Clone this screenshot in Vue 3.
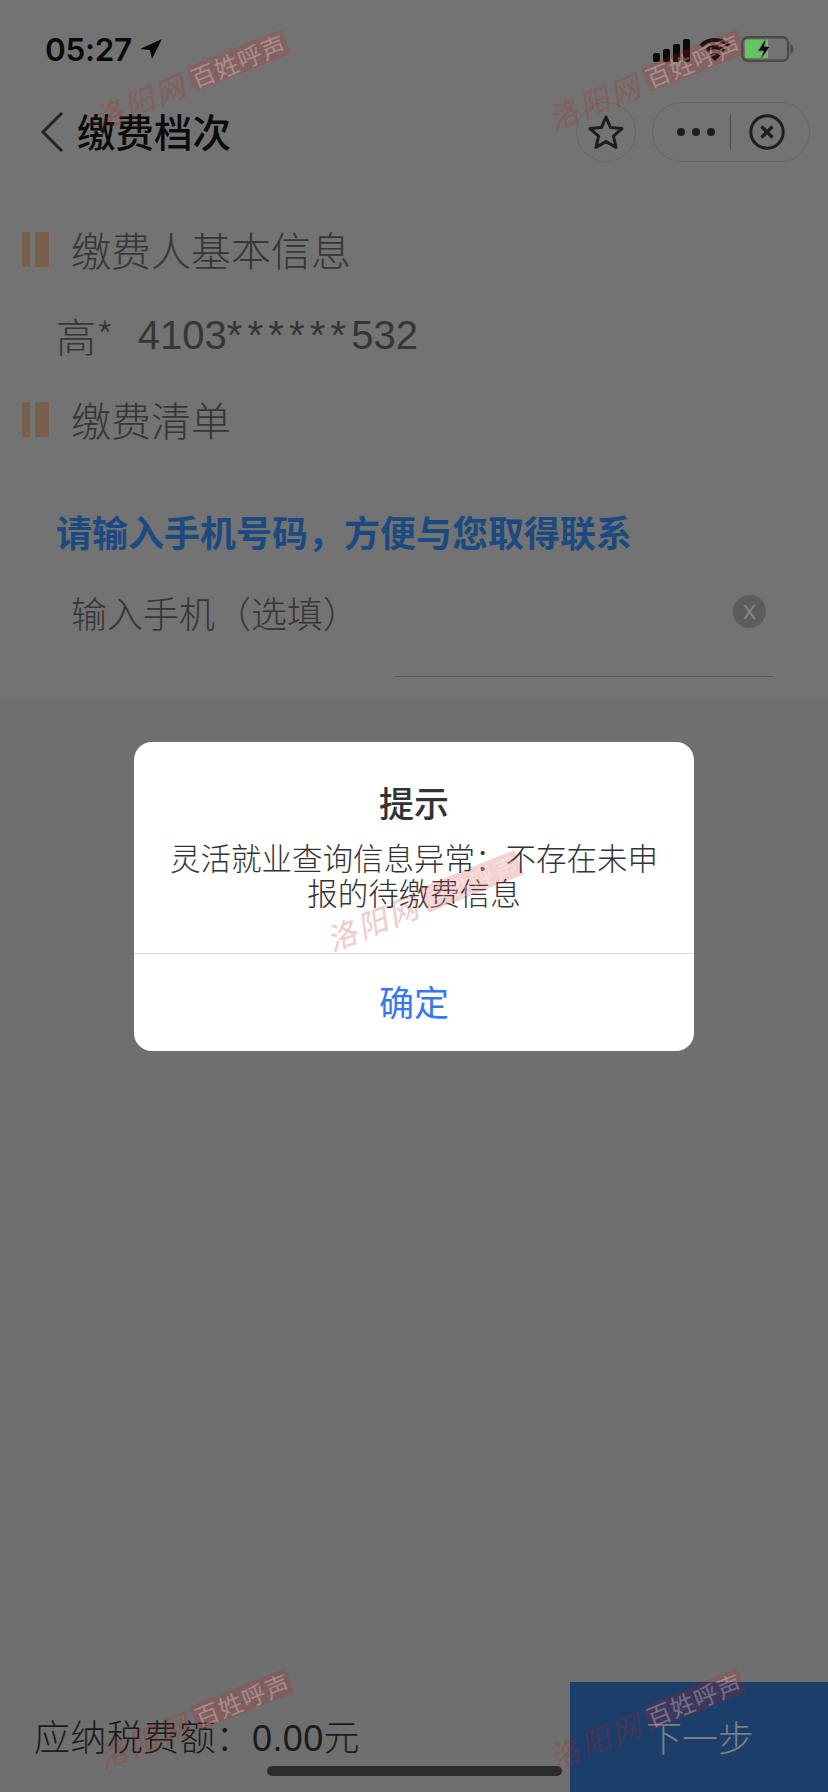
<template>
  <div class="page">
    <div class="top">
      <div class="status-bar">
        <div class="status-left">
          <span class="time">05:27</span>
          <svg class="loc" width="22" height="20" viewBox="0 0 22 20"><path d="M22 0 L0 10 L10 11 L12 20 Z" fill="#0a0a0a" /></svg>
        </div>
        <div class="status-right">
          <div class="signal">
            <i v-for="h in signalBars" :key="h" :style="{ height: h + 'px' }"></i>
          </div>
          <svg width="32" height="25" viewBox="0 0 32 25" fill="none" stroke="#0a0a0a" stroke-width="4">
            <path d="M2 9 C9 1 23 1 30 9" />
            <path d="M7 14 C12 9 20 9 25 14" />
            <path d="M16 24 L10.5 18.5 C13.5 15.6 18.5 15.6 21.5 18.5 Z" fill="#0a0a0a" stroke="none" />
          </svg>
          <svg class="battery" width="53" height="26" viewBox="0 0 53 26">
            <rect x="1.2" y="1.2" width="46" height="23.6" rx="6" fill="none" stroke="#4a4a4a" stroke-width="2.4" />
            <path d="M4 5 a1.5 1.5 0 0 1 1.5 -1.5 H27 V22 H4 Z" fill="#62c562" />
            <path d="M49.5 8 C51.5 9 52.5 11 52.5 13 C52.5 15 51.5 17 49.5 18 Z" fill="#4a4a4a" />
            <path d="M25 2 L17 15 L22.5 15 L19.5 24 L29 10.5 L23.5 10.5 Z" fill="#0a0a0a" stroke="#737373" stroke-width="1" />
          </svg>
        </div>
      </div>

      <div class="nav">
        <svg class="back" width="22" height="40" viewBox="0 0 22 40" fill="none" stroke="#222" stroke-width="3"><path d="M21 1 L2 20 L21 39" /></svg>
        <span class="nav-title">缴费档次</span>
        <div class="nav-btns">
          <div class="star-btn">
            <svg width="36" height="34" viewBox="0 0 36 34" fill="none" stroke="#1e1e1e" stroke-width="3" stroke-linejoin="round">
              <path d="M18 2 L22.6 12.6 L34 13.6 L25.4 21.2 L28 32.4 L18 26.5 L8 32.4 L10.6 21.2 L2 13.6 L13.4 12.6 Z" />
            </svg>
          </div>
          <div class="capsule">
            <div class="dots"><i></i><i></i><i></i></div>
            <div class="capsule-line"></div>
            <svg width="36" height="36" viewBox="0 0 36 36" fill="none" stroke="#1e1e1e" stroke-width="3">
              <circle cx="18" cy="18" r="16.2" />
              <path d="M12.5 12.5 L23.5 23.5 M23.5 12.5 L12.5 23.5" stroke-width="3.4" />
            </svg>
          </div>
        </div>
      </div>

      <div class="section-title first"><span class="mark"></span>缴费人基本信息</div>
      <div class="person">
        <span class="person-name">高*</span>
        <span>4103<span class="stars">******</span>532</span>
      </div>
      <div class="section-title second"><span class="mark"></span>缴费清单</div>

      <div class="phone-tip">请输入手机号码，方便与您取得联系</div>
      <div class="phone-row">
        <span>输入手机（选填）</span>
        <span class="clear">x</span>
      </div>
      <div class="phone-line"></div>
    </div>

    <div class="footer">
      <div class="amount">应纳税费额：0.00元</div>
      <div class="next">下一步</div>
    </div>

    <div class="home-bar"></div>

    <div class="dialog-wrap">
      <div class="dialog">
        <div class="dialog-body">
          <div class="dialog-title">提示</div>
          <div class="dialog-msg">灵活就业查询信息异常：不存在未申报的待缴费信息</div>
        </div>
        <div class="dialog-btn">确定</div>
      </div>
    </div>

    <div
      v-for="m in marks"
      :key="m.x + '-' + m.y"
      class="watermark"
      :style="{ left: m.x + 'px', top: m.y + 'px' }"
    >
      <span class="wm-city">洛阳网</span>
      <span class="wm-box">百姓呼声</span>
    </div>
  </div>
</template>

<script setup>
const signalBars = [9, 13, 18, 23]

// watermark centres
const marks = [
  { x: 190, y: 80 },
  { x: 645, y: 80 },
  { x: 423, y: 901 },
  { x: 194, y: 1719 },
  { x: 646, y: 1719 },
]
</script>

<style>
body {
  margin: 0;
}
</style>

<style scoped>
.page {
  position: relative;
  width: 828px;
  height: 1792px;
  overflow: hidden;
  display: flex;
  flex-direction: column;
  background: #6f6f6f;
  font-family: "Liberation Sans", "Noto Sans CJK SC", sans-serif;
  color: #363636;
}

.top {
  height: 698px;
  background: #737373;
}

.status-bar {
  height: 100px;
  display: flex;
  align-items: center;
  justify-content: space-between;
  padding: 0 34px 0 45px;
  box-sizing: border-box;
}
.status-left {
  display: flex;
  align-items: center;
  gap: 8px;
}
.time {
  font-family: Inter, sans-serif;
  font-size: 31.5px;
  font-weight: 600;
  color: #0a0a0a;
  line-height: 40px;
  letter-spacing: -0.3px;
}
.loc {
  margin-top: -2px;
}
.status-right {
  display: flex;
  align-items: flex-end;
  gap: 10px;
  padding-bottom: 2px;
}
.signal {
  display: flex;
  align-items: flex-end;
  gap: 3px;
  height: 25px;
  margin-right: -1px;
}
.signal i {
  width: 7px;
  border-radius: 2px;
  background: #0a0a0a;
}

.nav {
  height: 64px;
  display: flex;
  align-items: center;
  padding: 0 18px 0 41px;
}
.back {
  margin-right: 14px;
  margin-top: -1px;
}
.nav-title {
  font-size: 38.5px;
  font-weight: 500;
  line-height: 64px;
  margin-top: -5px;
  color: #0b0b0b;
  font-family: "Noto Sans CJK SC", sans-serif;
}
.nav-btns {
  margin-left: auto;
  display: flex;
  gap: 16px;
}
.star-btn {
  width: 60px;
  height: 60px;
  box-sizing: border-box;
  border: 1px solid #666;
  border-radius: 50%;
  display: flex;
  align-items: center;
  justify-content: center;
}
.capsule {
  width: 158px;
  height: 60px;
  box-sizing: border-box;
  border: 1px solid #666;
  border-radius: 30px;
  display: flex;
  align-items: center;
  padding-left: 24px;
}
.dots {
  display: flex;
  gap: 7px;
}
.dots i {
  width: 8px;
  height: 8px;
  border-radius: 50%;
  background: #1e1e1e;
}
.capsule-line {
  width: 1px;
  height: 36px;
  background: #4e4e4e;
  margin: 0 18px 0 15px;
}

.section-title {
  display: flex;
  align-items: center;
  height: 36px;
  font-size: 40px;
  font-family: "Noto Sans CJK SC", sans-serif;
  font-weight: 300;
}
.section-title.first {
  margin-top: 67px;
}
.section-title.second {
  margin-top: 41px;
}
.mark {
  width: 27px;
  height: 35px;
  margin: 0 22px 0 22px;
  background: linear-gradient(to right, #785e4c 8px, #737373 8px, #737373 13px, #785e4c 13px);
}

.person {
  margin-top: 43px;
  padding-left: 56px;
  height: 50px;
  line-height: 50px;
  font-size: 40px;
  display: flex;
  gap: 24px;
}
.person-name {
  font-family: "Noto Sans CJK SC", sans-serif;
  font-weight: 300;
}
.stars {
  letter-spacing: 5.2px;
}

.phone-tip {
  margin-top: 69px;
  padding-left: 56px;
  font-size: 36px;
  line-height: 50px;
  font-weight: 700;
  color: #1c4a80;
  font-family: "Noto Sans CJK SC", sans-serif;
}
.phone-row {
  margin-top: 31px;
  height: 50px;
  line-height: 50px;
  padding: 0 62px 0 71px;
  font-size: 36px;
  font-family: "Noto Sans CJK SC", sans-serif;
  font-weight: 300;
  display: flex;
  justify-content: space-between;
  align-items: center;
}
.clear {
  width: 33px;
  height: 33px;
  margin-top: -2px;
  border-radius: 50%;
  background: #5c5c5c;
  color: #838383;
  font-size: 26px;
  line-height: 31px;
  text-align: center;
  font-family: "Liberation Sans", sans-serif;
}
.phone-line {
  height: 1px;
  margin: 39px 55px 0 395px;
  background: #5a5a5a;
}

.footer {
  margin-top: auto;
  height: 110px;
  display: flex;
  align-items: center;
  justify-content: space-between;
  padding-left: 34px;
}
.amount {
  font-size: 36px;
  color: #1b1b1b;
  font-weight: 300;
  letter-spacing: 0.35px;
  margin-top: -4px;
  font-family: "Liberation Sans", "Noto Sans CJK SC", sans-serif;
}
.next {
  width: 258px;
  height: 110px;
  line-height: 108px;
  padding-left: 76px;
  box-sizing: border-box;
  background: #1b3e6b;
  color: #7f7f7f;
  font-size: 36px;
  font-weight: 300;
  font-family: "Noto Sans CJK SC", sans-serif;
}

.home-bar {
  position: absolute;
  left: 267px;
  bottom: 16px;
  width: 295px;
  height: 10px;
  border-radius: 5px;
  background: #2c2c2c;
}

.dialog-wrap {
  position: absolute;
  inset: 0;
  display: flex;
  align-items: center;
  justify-content: center;
}
.dialog {
  width: 560px;
  height: 309px;
  background: #fff;
  border-radius: 18px;
  display: flex;
  flex-direction: column;
  font-family: "Noto Sans CJK SC", sans-serif;
}
.dialog-body {
  height: 212px;
  box-sizing: border-box;
  padding: 35px 26px 0;
  border-bottom: 1px solid #d9d9d9;
  text-align: center;
}
.dialog-title {
  font-size: 35px;
  font-weight: 500;
  line-height: 50px;
  color: #333;
}
.dialog-msg {
  margin-top: 13px;
  font-size: 30.5px;
  line-height: 35px;
  font-weight: 300;
  color: #333;
}
.dialog-btn {
  flex: 1;
  display: flex;
  align-items: center;
  justify-content: center;
  padding-bottom: 4px;
  font-size: 35px;
  color: #3478f6;
}

.watermark {
  position: absolute;
  display: flex;
  align-items: center;
  gap: 5px;
  transform: translate(-50%, -50%) rotate(-22deg);
  white-space: nowrap;
  font-family: "Noto Sans CJK SC", sans-serif;
}
.wm-city {
  font-size: 30px;
  font-weight: 500;
  font-style: italic;
  letter-spacing: 3px;
  color: rgba(190, 30, 30, 0.22);
}
.wm-box {
  width: 103px;
  height: 26px;
  line-height: 26px;
  text-align: center;
  font-size: 24px;
  letter-spacing: 1px;
  color: rgba(255, 255, 255, 0.3);
  background: rgba(200, 30, 30, 0.2);
}
</style>
